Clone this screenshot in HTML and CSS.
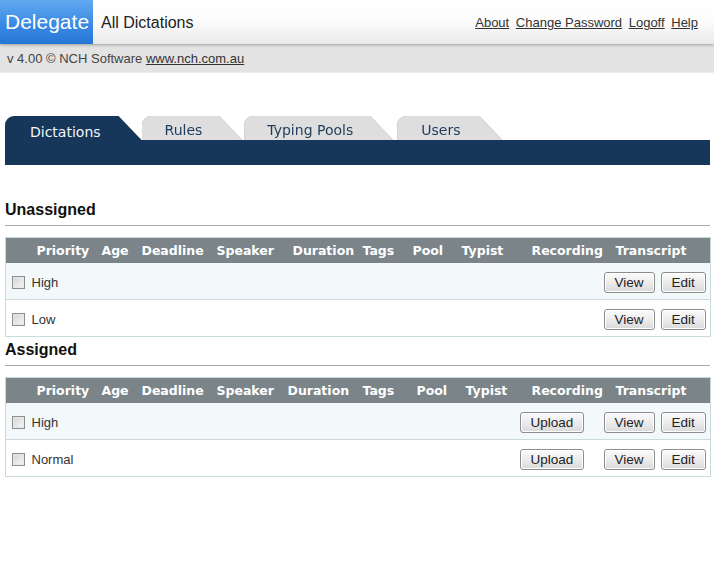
FILE: index.html
```html
<!DOCTYPE html>
<html>
<head>
<meta charset="utf-8">
<title>Delegate - All Dictations</title>
<link rel="stylesheet" href="styles.css">
</head>
<body>
<div class="topbar">
  <div class="brand">Delegate</div>
  <div class="page-title">All Dictations</div>
  <div class="toplinks">
    <a href="#">About</a>
    <a href="#">Change Password</a>
    <a href="#">Logoff</a>
    <a href="#">Help</a>
  </div>
</div>
<div class="versionbar">v 4.00 &copy; NCH Software <a href="#">www.nch.com.au</a></div>

<div class="content">
  <div class="tabs">
    <span class="tab-wrap"><a class="tab active" href="#">Dictations</a></span>
    <span class="tab-wrap"><a class="tab" href="#">Rules</a></span>
    <span class="tab-wrap"><a class="tab" href="#">Typing Pools</a></span>
    <span class="tab-wrap"><a class="tab tab-last" href="#">Users</a></span>
  </div>
  <div class="tabband"></div>

  <h2 class="section first">Unassigned</h2>
  <table class="dict">
    <colgroup>
      <col class="c-chk"><col class="c-pri"><col class="c-age"><col class="c-dl"><col class="c-spk"><col class="c-dur"><col class="c-tag"><col class="c-pool"><col class="c-typ"><col class="c-rec"><col class="c-trn">
    </colgroup>
    <thead>
      <tr>
        <th></th><th class="h-pri">Priority</th><th>Age</th><th>Deadline</th><th>Speaker</th><th>Duration</th><th>Tags</th><th>Pool</th><th>Typist</th><th class="h-rec">Recording</th><th class="h-trn">Transcript</th>
      </tr>
    </thead>
    <tbody>
      <tr class="odd">
        <td class="chk"><input type="checkbox"></td><td class="pri">High</td><td></td><td></td><td></td><td></td><td></td><td></td><td></td><td class="rec"></td>
        <td class="trn"><div class="btns"><button>View</button><button>Edit</button></div></td>
      </tr>
      <tr>
        <td class="chk"><input type="checkbox"></td><td class="pri">Low</td><td></td><td></td><td></td><td></td><td></td><td></td><td></td><td class="rec"></td>
        <td class="trn"><div class="btns"><button>View</button><button>Edit</button></div></td>
      </tr>
    </tbody>
  </table>

  <h2 class="section">Assigned</h2>
  <table class="dict assigned">
    <colgroup>
      <col class="c-chk"><col class="c-pri"><col class="c-age"><col class="c-dl"><col class="c-spk"><col class="c-dur"><col class="c-tag"><col class="c-pool"><col class="c-typ"><col class="c-rec"><col class="c-trn">
    </colgroup>
    <thead>
      <tr>
        <th></th><th class="h-pri">Priority</th><th>Age</th><th>Deadline</th><th>Speaker</th><th>Duration</th><th>Tags</th><th>Pool</th><th>Typist</th><th class="h-rec">Recording</th><th class="h-trn">Transcript</th>
      </tr>
    </thead>
    <tbody>
      <tr class="odd">
        <td class="chk"><input type="checkbox"></td><td class="pri">High</td><td></td><td></td><td></td><td></td><td></td><td></td><td></td>
        <td class="rec"><button>Upload</button></td>
        <td class="trn"><div class="btns"><button>View</button><button>Edit</button></div></td>
      </tr>
      <tr>
        <td class="chk"><input type="checkbox"></td><td class="pri">Normal</td><td></td><td></td><td></td><td></td><td></td><td></td><td></td>
        <td class="rec"><button>Upload</button></td>
        <td class="trn"><div class="btns"><button>View</button><button>Edit</button></div></td>
      </tr>
    </tbody>
  </table>
</div>
</body>
</html>
```

FILE: styles.css
```css
* {
  font-family: "Liberation Sans", Arial, sans-serif;
}
body {
  margin: 0;
  background: #fff;
  color: #333;
}
a {
  color: #333;
}

/* top header */
.topbar {
  display: flex;
  align-items: center;
  height: 44px;
  background: linear-gradient(#ffffff 0%, #fdfdfd 45%, #e9e9e9 100%);
  box-shadow: 0 1px 3px rgba(0, 0, 0, 0.3);
  position: relative;
}
.brand {
  width: 93px;
  height: 44px;
  line-height: 44px;
  box-sizing: border-box;
  padding-left: 5px;
  font-size: 21px;
  color: #fff;
  background: linear-gradient(#62a9f0, #3a8ae4 55%, #2676d6);
}
.page-title {
  margin-left: 8px;
  font-size: 16px;
  color: #222;
  padding-top: 1px;
}
.toplinks {
  margin-left: auto;
  margin-right: 16px;
  font-size: 13px;
  padding-top: 1px;
}
.toplinks a {
  margin-left: 3px;
}
.versionbar {
  height: 28px;
  line-height: 30px;
  padding-left: 7px;
  font-size: 13px;
  color: #444;
  background: #e3e3e3;
  border-bottom: 1px solid #ededed;
}

.content {
  padding: 0 4px 0 5px;
}

/* tabs */
.tabs {
  display: flex;
  align-items: flex-end;
  margin-top: 43px;
  height: 24px;
}
.tab-wrap {
  display: block;
  margin-right: 2px;
  filter: drop-shadow(0 0 0.6px #9a9a9a);
}
.tab-wrap:first-child {
  filter: none;
  margin-right: 0;
}
.tab {
  display: block;
  box-sizing: border-box;
  height: 24px;
  padding: 5px 40px 0 23px;
  line-height: 18px;
  font-family: "DejaVu Sans", Verdana, sans-serif;
  font-size: 14px;
  color: #1f3b5c;
  text-decoration: none;
  background: #dedede;
  border-top-left-radius: 9px;
  border-top-right-radius: 4px;
  clip-path: polygon(0 0, calc(100% - 23px) 0, 100% 100%, 0 100%);
}
.tab.tab-last {
  margin-left: 2px;
  padding-left: 24px;
  padding-right: 42px;
}
.tab.active {
  padding: 7px 41px 0 25px;
  color: #f2f5f9;
  background: #16365a;
}
.tabband {
  height: 25px;
  background: #16365a;
}

/* sections */
.section {
  margin: 3px 0 11px 0;
  padding-bottom: 6px;
  font-size: 16px;
  line-height: 19px;
  font-weight: bold;
  color: #111;
  border-bottom: 1px solid #aaa;
}
.section.first {
  margin-top: 35px;
}

/* tables */
table.dict {
  width: 705px;
  table-layout: fixed;
  border-collapse: collapse;
  border: 1px solid #c9d8dd;
}
col.c-chk { width: 23px; }
col.c-pri { width: 67px; }
col.c-age { width: 40px; }
col.c-dl { width: 75px; }
col.c-spk { width: 76px; }
col.c-dur { width: 70px; }
col.c-tag { width: 50px; }
col.c-pool { width: 49px; }
col.c-typ { width: 58px; }
col.c-rec { width: 85px; }
col.c-trn { width: 112px; }
.assigned col.c-spk { width: 71px; }
.assigned col.c-dur { width: 75px; }
.assigned col.c-tag { width: 54px; }
.assigned col.c-pool { width: 49px; }
.assigned col.c-typ { width: 54px; }

table.dict th {
  height: 25px;
  padding: 0 0 0 6px;
  text-align: left;
  white-space: nowrap;
  font-family: "DejaVu Sans", Verdana, sans-serif;
  font-size: 12.5px;
  font-weight: bold;
  color: #fff;
  background: #7a8489;
}
table.dict th.h-pri { padding-left: 8px; }
table.dict th.h-rec { padding-left: 18px; }
table.dict th.h-trn { padding-left: 17px; }

table.dict td {
  height: 34px;
  padding: 2px 0 0 0;
  font-size: 13px;
  color: #333;
  border-bottom: 1px solid #cbdadf;
  vertical-align: middle;
}
table.dict tr.odd td {
  background: #f3f9fa;
}
td.chk { padding-left: 6px !important; }
td.pri { padding-left: 3px !important; }
td.rec { padding-left: 6px !important; }
td.trn { padding-left: 5px !important; }

input[type="checkbox"] {
  appearance: none;
  -webkit-appearance: none;
  display: block;
  width: 13px;
  height: 13px;
  margin: 1px 0 0 0;
  border: 1px solid #8e8e8e;
  background: linear-gradient(135deg, #d4d4d4, #f7f7f7);
  box-shadow: inset 0 0 0 1px #e8e8e8;
}

.btns {
  display: flex;
  gap: 6px;
}
button {
  height: 21px;
  padding: 0 10px;
  font-size: 13.5px;
  line-height: 19px;
  color: #222;
  border: 1px solid #8d8d8d;
  border-radius: 3px;
  background: linear-gradient(#fbfbfb, #ececec 50%, #d9d9d9);
  box-shadow: inset 0 0 0 1px #fff;
}
```
